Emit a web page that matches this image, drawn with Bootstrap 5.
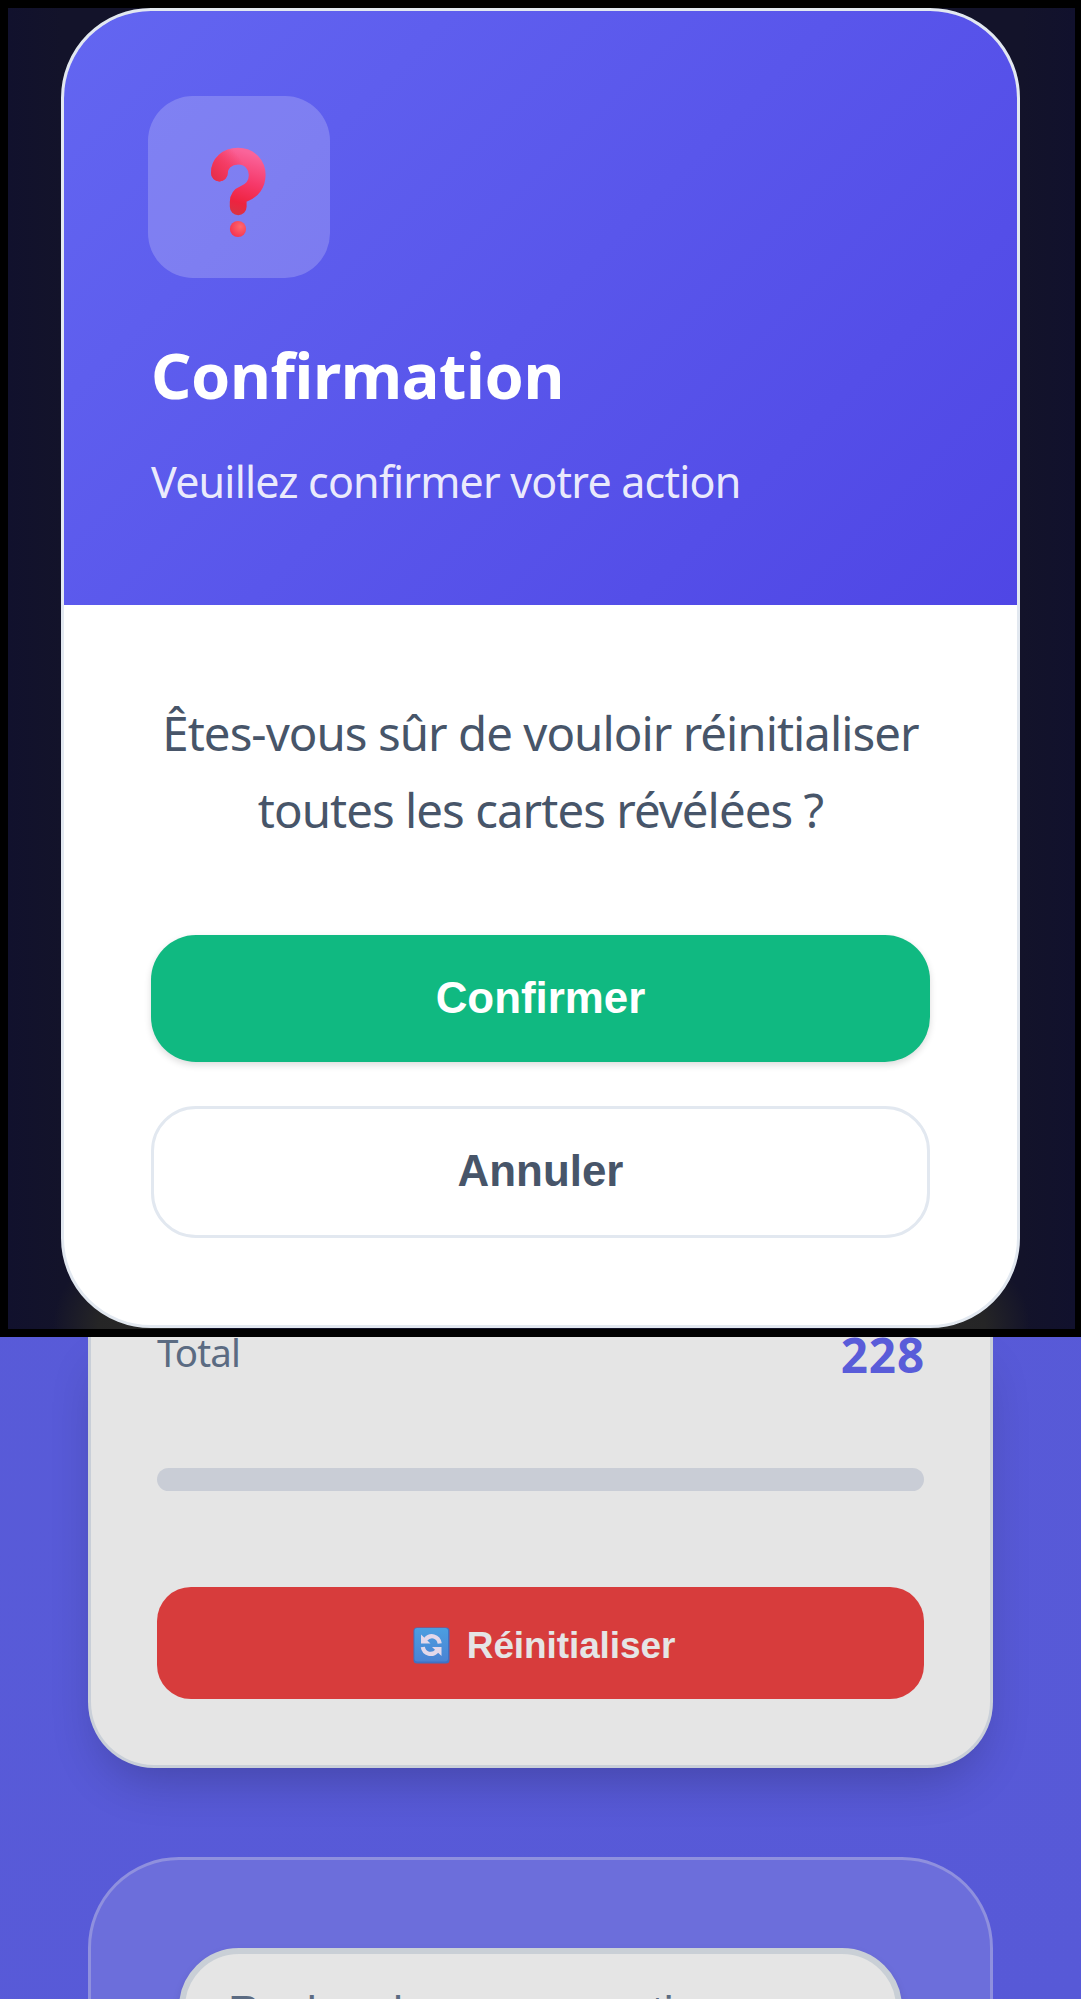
<!DOCTYPE html>
<html lang="fr">
<head>
<meta charset="utf-8">
<meta name="viewport" content="width=device-width, initial-scale=1">
<title>Confirmation</title>
<link href="https://cdn.jsdelivr.net/npm/bootstrap@5.3.0/dist/css/bootstrap.min.css" rel="stylesheet">
<style>
body{font-family:"Noto Sans","Open Sans",sans-serif;background:#585ad7;height:1999px;overflow:hidden}
.screen{height:1999px;overflow:hidden;background:linear-gradient(135deg,#595cd9,#5759d7)}
.stage{height:1337px;border:solid #000;border-width:8px 6px 8px 8px;position:relative;z-index:2;
 background:radial-gradient(circle at 125px 1320px,#272727 0,#252526 35px,#1b1a2600 80px),radial-gradient(circle at 942px 1320px,#272727 0,#252526 35px,#1b1a2600 80px),linear-gradient(90deg,#11112d 0,#13132a 5%,#13132a 95%,#11112d 100%)}
.dialog-box{width:959px;height:1320px;margin-left:53px;border:3px solid #e2e8f0;border-radius:90px;overflow:hidden;background:#fff}
.dialog-head{height:593.5px;padding:85px 87px 0;background:linear-gradient(135deg,#6366f1,#4f46e5)}
.icon-tile{width:182px;height:182px;margin-left:-3px;border-radius:45px;background:rgba(255,255,255,.2)}
.dialog-title{font-size:63px;line-height:84px;font-weight:700;margin:55px 0 0;white-space:nowrap;letter-spacing:-.4px}
.dialog-sub{font-size:43px;line-height:65px;margin:32px 0 0;white-space:nowrap;color:rgba(255,255,255,.9);letter-spacing:-.8px}
.dialog-main{padding:89px 87px 0}
.question{font-size:47.4px;line-height:77px;margin:0 -20px 87px;color:#475569;white-space:nowrap;letter-spacing:-.96px}
.choice{font:700 43.9px/1.15 "Liberation Sans",Arial,sans-serif;border-radius:45px;padding:0}
.choice-ok,.choice-ok:hover{height:127px;background:#10b981;color:#fff;border:0;box-shadow:0 3px 7px rgba(0,0,0,.14)}
.choice-no{height:132px;background:#fff;color:#475569;border:3px solid #e2e8f0}
.choices{gap:44px}
.stats{width:905px;height:431px;margin-left:88px;padding:0 66px;background:#e5e5e5;border:3px solid #c9cfd8;border-top:0;border-radius:0 0 66px 66px;box-shadow:0 23px 50px -14px rgba(0,0,0,.24)}
.total-label{font-size:38.5px;line-height:30px;color:#5b6b82;letter-spacing:-.9px}
.total-num{font-size:47.5px;line-height:36px;font-weight:700;color:#595cd9;letter-spacing:.9px;margin-right:-1px}
.track{height:23px;margin-top:95px;border-radius:12px;background:#c9cdd6}
.reset{height:112px;margin-top:96px;padding:6px 0 0 7px;border:0;border-radius:34px;background:#d73c3c;color:#e5e5e5;font:700 37px/1.15 "Liberation Sans",Arial,sans-serif;gap:17px}
.reset-text{letter-spacing:-.1px}
.reset svg{margin-top:-1px}
.finder{width:905px;height:240px;margin:89px 0 0 88px;padding:88px;border:3px solid #8f90de;border-radius:91px;background:#6c6edb}
.finder-input,.finder-input:focus{height:120px;border:6px solid #c9cfd6;border-radius:62px;background:#e5e5e5;color:#5b6b82;font:44.3px/52px "Liberation Sans",Arial,sans-serif;padding:7px 43px 0;box-shadow:0 4px 9px rgba(0,0,0,.1)}
.finder-input::placeholder{color:#5b6b82;opacity:1}
</style>
<script src="https://cdn.jsdelivr.net/npm/bootstrap@5.3.0/dist/js/bootstrap.bundle.min.js"></script>
</head>
<body>
<div class="screen">
  <section class="stage" role="dialog" aria-labelledby="dlg-title">
    <div class="dialog-box">
      <header class="dialog-head text-white">
        <div class="icon-tile">
          <svg width="183" height="182" viewBox="148 96 183 182" aria-hidden="true">
            <defs>
              <linearGradient id="q" gradientUnits="userSpaceOnUse" x1="253" y1="154" x2="234" y2="214"><stop offset="0" stop-color="#fa649a"/><stop offset=".45" stop-color="#f6396a"/><stop offset=".8" stop-color="#ee233f"/><stop offset="1" stop-color="#d83343"/></linearGradient>
              <linearGradient id="qs" gradientUnits="userSpaceOnUse" x1="211" y1="180" x2="240" y2="158"><stop offset="0" stop-color="#e22d48"/><stop offset=".5" stop-color="#f2365a" stop-opacity=".8"/><stop offset="1" stop-color="#f2365a" stop-opacity="0"/></linearGradient>
              <radialGradient id="qd" cx=".65" cy=".35" r=".7"><stop offset="0" stop-color="#ff686f"/><stop offset="1" stop-color="#f53450"/></radialGradient>
            </defs>
            <g fill="none" stroke-width="16.8" stroke-linecap="round" stroke-linejoin="round">
              <path stroke="url(#q)" d="M219.4 173C219.4 163.500 227 156.200 238 156.200C250 156.200 257.200 165 257.200 175C257.200 184 252 190.500 244.500 193.500C240 195.300 238.200 197.500 238.200 202V206.800"/>
              <path stroke="url(#qs)" d="M219.4 173C219.4 163.500 227 156.200 238 156.200"/>
            </g>
            <circle cx="238" cy="229" r="8.1" fill="url(#qd)"/>
          </svg>
        </div>
        <h1 class="dialog-title" id="dlg-title">Confirmation</h1>
        <p class="dialog-sub">Veuillez confirmer votre action</p>
      </header>
      <div class="dialog-main">
        <p class="question text-center">Êtes-vous sûr de vouloir réinitialiser<br>toutes les cartes révélées ?</p>
        <div class="choices d-flex flex-column">
          <button type="button" class="btn choice choice-ok w-100">Confirmer</button>
          <button type="button" class="btn choice choice-no w-100">Annuler</button>
        </div>
      </div>
    </div>
  </section>
  <section class="stats">
    <div class="d-flex justify-content-between align-items-start">
      <span class="total-label">Total</span>
      <span class="total-num">228</span>
    </div>
    <div class="track"></div>
    <button type="button" class="btn reset w-100 d-flex align-items-center justify-content-center">
      <svg width="37" height="37" viewBox="0 0 37 37" aria-hidden="true">
        <defs><linearGradient id="b" x1="0" y1="0" x2="0" y2="1"><stop offset="0" stop-color="#4b9ee0"/><stop offset="1" stop-color="#4a83d4"/></linearGradient></defs>
        <rect x=".5" y=".5" width="36" height="36" rx="3.500" fill="#3f71c4"/>
        <rect x="1.500" y="1" width="33.500" height="33.500" rx="3" fill="url(#b)"/>
        <g fill="none" stroke="#e3d8ea" stroke-width="4.200"><path d="M12.500 12.500C17 7 25.500 8.500 26.700 16.500"/><path d="M24 24C19.500 29 11 27.500 9.800 20"/></g>
        <path d="M8 7.500V16.500H17.500ZM28.500 29V20H19Z" fill="#e3d8ea"/>
      </svg>
      <span class="reset-text">Réinitialiser</span>
    </button>
  </section>
  <section class="finder">
    <input type="text" class="form-control finder-input" placeholder="Rechercher une question...">
  </section>
</div>
</body>
</html>
